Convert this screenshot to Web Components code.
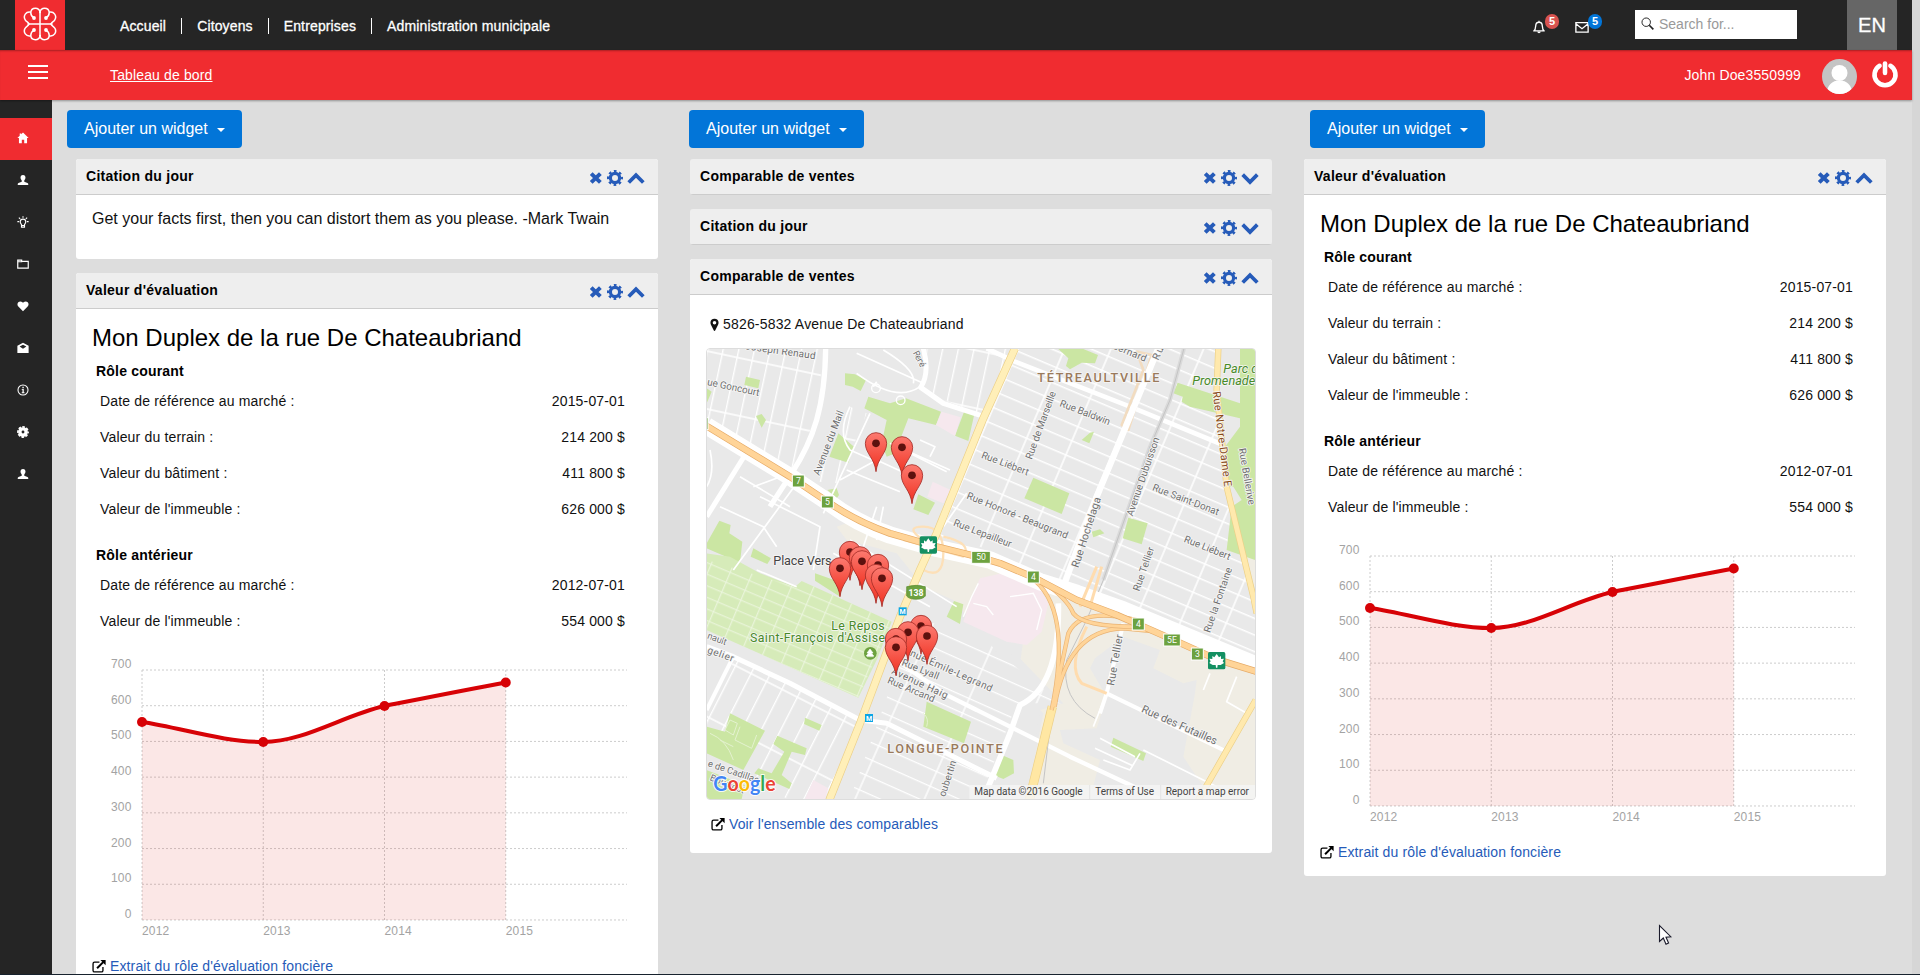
<!DOCTYPE html>
<html lang="fr">
<head>
<meta charset="utf-8">
<title>Tableau de bord</title>
<style>
html,body{margin:0;height:100%;overflow:hidden;background:#ddd}
body{font-family:"Liberation Sans",Arial,sans-serif;font-size:14px;color:#000}
</style>
</head>
<body>
<city-dashboard></city-dashboard>
<script>
const define = (name, css, html) => customElements.define(name, class extends HTMLElement {
  connectedCallback() {
    if (this.shadowRoot) return;
    const t = document.createElement('template');
    t.innerHTML = '<style>*{box-sizing:border-box}' + css + '</style>' + (typeof html === 'function' ? html(this) : html);
    this.attachShadow({mode: 'open'}).append(t.content.cloneNode(true));
  }
});

/* ---------- icons ---------- */
const person = '<path d="M8 1.2c2.300 0 3.400 1.600 3.300 3.600-.1 1.700-.8 3-1.600 3.700v1.700l4.300 1.700c.7.300 1 .8 1 1.500v1.400H1v-1.400c0-.7.3-1.200 1-1.500l4.300-1.700V8.500C5.500 7.800 4.800 6.500 4.700 4.800 4.600 2.800 5.700 1.200 8 1.200z" fill="currentColor"/>';
const gear = '<circle cx="8" cy="8" r="4.600" fill="none" stroke="currentColor" stroke-width="3.200"/><circle cx="8" cy="8" r="6.800" fill="none" stroke="currentColor" stroke-width="2.400" stroke-dasharray="2.670 2.670" stroke-dashoffset="1.330"/>';
const ICONS = {
  home: '<path d="M8 .8 15.500 8H13.400V15H9.600V10.300H6.400V15H2.600V8H.5L3.600 5V2h2v1.100z" fill="currentColor"/>',
  person, gear,
  cog: '<circle cx="8" cy="8" r="4.200" fill="none" stroke="currentColor" stroke-width="4.600"/><circle cx="8" cy="8" r="6.800" fill="none" stroke="currentColor" stroke-width="2.200" stroke-dasharray="3.400 1.940" stroke-dashoffset="1.700"/>',
  bulb: '<g fill="none" stroke="currentColor" stroke-width="1.500"><path d="M6 11.500C5.500 10 4.300 9.600 4.300 7.800a3.700 3.700 0 0 1 7.400 0c0 1.800-1.200 2.200-1.700 3.700v3.300H6zM6 12.700h4M8 .3v2M.5 7.500h2.300M13.200 7.500h2.300M2.500 2.200l1.700 1.700M13.500 2.200l-1.700 1.700"/></g>',
  folder: '<path d="M1 13.500V2.800h5.200v1.700H15v9zM1 5h6" fill="none" stroke="currentColor" stroke-width="1.600"/>',
  heart: '<path d="M8 15 1.800 8.800C.2 7.200.2 4.600 1.700 3c1.500-1.500 4-1.500 5.500 0l.8.800.8-.8c1.500-1.500 4-1.500 5.500 0s1.500 4.200-.1 5.800z" fill="currentColor"/>',
  open: '<path d="M8 1 15.500 5v9.800H.5V5zM3.500 6 8 9l4.500-3L8 3.500z" fill="currentColor" fill-rule="evenodd"/>',
  info: '<circle cx="8" cy="8" r="6.700" fill="none" stroke="currentColor" stroke-width="1.400"/><path d="M7.200 3.800h1.800v1.700H7.200zM6.300 6.600H9v4.400h1v1.200H6.300V11h1V7.800h-1z" fill="currentColor"/>',
  bell: '<path d="M2 12.500c1.700-1.200 2.100-2.600 2.200-5.500C4.300 4 6 2.600 8 2.600s3.700 1.400 3.800 4.400c.1 2.900.5 4.300 2.200 5.500zM8 .8v1.800" fill="none" stroke="currentColor" stroke-width="1.500" stroke-linejoin="round"/><path d="M6.100 13.200h3.800c0 2.600-3.800 2.600-3.800 0z" fill="currentColor"/>',
  mail: '<path d="M1 3h14v10.800H1zM1 4.200 8 10l7-5.800" fill="none" stroke="currentColor" stroke-width="1.500"/>',
  search: '<circle cx="6.400" cy="6.400" r="5.200" fill="none" stroke="currentColor" stroke-width="1.200"/><path d="m10.200 10.200 5 5" stroke="currentColor" stroke-width="2"/>',
  power: '<path d="M4.900 3.300a6 6 0 1 0 6.200 0" fill="none" stroke="currentColor" stroke-width="2.600" stroke-linecap="round"/><path d="M8 2V7.400" stroke="currentColor" stroke-width="2.600" stroke-linecap="round"/>',
  close: '<path d="m2.500 2.900 10.500 10.200M13 2.900 2.500 13.100" stroke="currentColor" stroke-width="4.500"/>',
  up: '<path d="M1.500 12 8 5.400l6.500 6.600" fill="none" stroke="currentColor" stroke-width="3.300"/>',
  down: '<path d="M1.500 5 8 11.600 14.500 5" fill="none" stroke="currentColor" stroke-width="3.300"/>',
  ext: '<path d="M8.500 3.600H3A1.800 1.800 0 0 0 1.200 5.400v7.600A1.800 1.800 0 0 0 3 14.800h7.700a1.800 1.800 0 0 0 1.800-1.800V9.200" fill="none" stroke="currentColor" stroke-width="1.500"/><path d="m5.800 10.600 7-7" stroke="currentColor" stroke-width="2.300"/><path d="M9.600 1H15.600V7z" fill="currentColor"/>',
  pin: '<path fill-rule="evenodd" d="M8 1c3 0 5 2 5 4.900 0 1-.3 1.800-.6 2.500L9 15.200c-.5.900-1.500.9-2 0L3.600 8.400C3.300 7.700 3 6.900 3 5.900 3 3 5 1 8 1zm0 2.700a2.200 2.200 0 1 0 0 4.400 2.200 2.200 0 0 0 0-4.400z" fill="currentColor"/>'
};
define('ui-icon', ':host{display:inline-block;width:var(--s,12px);height:var(--s,12px);flex:none}svg{display:block;width:100%;height:100%}',
  el => `<svg viewBox="0 0 16 16">${ICONS[el.getAttribute('name')]}</svg>`);

define('mtl-logo', ':host{display:flex;width:50px;height:50px;background:#f02c30;align-items:center;justify-content:center;padding-bottom:2px}svg{width:34px;height:34px}',
  `<svg viewBox="-17 -17 34 34" fill="none" stroke="#fff" stroke-width="1.500" stroke-linecap="round">
  <path d="M0-12V12M-12 0H12"/>
  ${[[1,1],[-1,1],[1,-1],[-1,-1]].map(([a,b]) => `<g transform="scale(${a} ${b})"><path d="M0-11.500C0-17 9-17.200 9.200-11.200C9.200-9 8.200-7.500 6.300-6.300M9.200-11.800C14-13 17.200-8 14.800-4.200C13.500-2 11.500-2 11 0"/><circle cx="6" cy="-6" r="1.900" fill="#fff" stroke="none"/></g>`).join('')}
  </svg>`);

/* ---------- bars ---------- */
define('top-bar', `
:host{display:flex;height:50px;background:#252525;color:#fff;padding-left:15px;width:1912px}
nav{display:flex;align-items:center;padding:0 0 0 40px;height:51px;letter-spacing:.14px}
nav a{padding:0 15px;line-height:16px;border-left:1px solid #fff;-webkit-text-stroke:.3px #fff}
nav a:first-child{border:0}
.r{margin-left:auto;display:flex}
.n{display:flex;position:relative;align-items:flex-start;padding-top:20px;width:43px}
.n b{position:absolute;left:13px;top:14px;width:14px;height:15px;border-radius:8px;background:#d9534f;font-size:11px;line-height:15px;text-align:center}
.n:nth-child(2) b{background:#0275d8}
.s{display:flex;background:#fff;width:162px;height:29px;margin:10px 50px 0 17px;padding:7px 6px;color:#222;gap:5px}
.s span{color:#999;line-height:15px}
.en{width:50px;background:#666;margin-right:15px;font-size:20px;line-height:50px;text-align:center;-webkit-text-stroke:.3px #fff}`,
`<mtl-logo></mtl-logo><nav><a>Accueil</a><a>Citoyens</a><a>Entreprises</a><a>Administration municipale</a></nav>
<div class="r"><div class="n"><ui-icon name="bell" style="--s:14px"></ui-icon><b>5</b></div><div class="n"><ui-icon name="mail" style="--s:14px"></ui-icon><b>5</b></div>
<div class="s"><ui-icon name="search" style="--s:13px"></ui-icon><span>Search for...</span></div><div class="en">EN</div></div>`);

define('user-bar', `
:host{display:flex;position:relative;height:50px;width:1912px;background:#f02c30;color:#fff;box-shadow:0 1px 2px rgba(0,0,0,.35),inset 0 2px 2px -1px rgba(0,0,0,.3);padding-left:28px;letter-spacing:.14px}
.h{width:20px;height:14px;border-top:2px solid #fff;border-bottom:2px solid #fff;margin-top:15px;display:flex;align-items:center}
.h i{height:2px;width:100%;background:#fff}
a{margin:17px 0 0 62px;line-height:16px;text-decoration:underline}
.u{margin:17px 21px 0 auto;line-height:16px}
svg{width:35px;height:35px;margin:9px 14px 0 0}
ui-icon{margin:10px 13px 0 0}`,
`<div class="h"><i></i></div><a>Tableau de bord</a><span class="u">John Doe3550999</span>
<svg viewBox="0 0 35 35"><defs><clipPath id="c"><circle cx="17.500" cy="17.500" r="17.500"/></clipPath></defs><g clip-path="url(#c)"><path fill="#c4c4c4" d="M0 0h35v35H0z"/><circle cx="17.500" cy="14" r="8" fill="#fff"/><path fill="#fff" d="M5 35c0-9 5-13.500 12.500-13.500S30 26 30 35z"/></g></svg>
<ui-icon name="power" style="--s:28px"></ui-icon>`);

define('side-bar', `
:host{display:flex;flex-direction:column;background:#252525;color:#fff;padding-top:18px}
div{height:42px;display:flex;align-items:center;padding:0 0 2px 17px}
div:first-of-type{background:#f02c30}
:host ui-icon{--s:12px}`,
  ['home','person','bulb','folder','heart','open','info','cog','person'].map(n => `<div><ui-icon name="${n}"></ui-icon></div>`).join(''));

/* ---------- widgets ---------- */
define('add-button', `
:host{display:flex;align-items:center;justify-content:space-between;width:175px;height:38px;margin:0 0 11px var(--shift,0);padding:0 17px 1px;border-radius:4px;background:#0275d8;color:#fff;font-size:16px}
i{border:4px solid transparent;border-top-color:#fff;border-bottom:0;margin-top:3px}`, '<slot></slot><i></i>');

define('widget-card', `
:host{display:block;background:#fff;border-radius:3px;margin-bottom:14px;overflow:hidden}
header{display:flex;height:36px;background:#eee;border-bottom:1px solid #ccc;padding:0 13px 0 10px;font-weight:700;line-height:35px;letter-spacing:.27px}
span{flex:1}
div{display:flex;color:#265bb9;gap:4px;height:36px;align-items:center;padding-top:1px}`,
el => `<header><span>${el.getAttribute('label')}</span><div><ui-icon name="close" style="--s:14px"></ui-icon><ui-icon name="gear" style="--s:16px"></ui-icon><ui-icon name="${el.hasAttribute('closed') ? 'down' : 'up'}" style="--s:18px"></ui-icon></div></header><slot></slot>`);

define('widget-link', ':host{display:flex;align-items:center;gap:4px;line-height:24px;height:24px;letter-spacing:.13px}a{color:#265bb9}',
  '<ui-icon name="ext" style="--s:14px"></ui-icon><a><slot></slot></a>');

define('value-chart', ':host{display:block;height:310px}svg{display:block;width:582px;height:310px}text{font-size:12px;fill:#a3a3a3;letter-spacing:.15px}', () => {
  let g = '';
  for (let i = 0; i < 8; i++) g += `<path d="M66 ${31 + i * 35.71}H551"/>`;
  for (let i = 0; i < 4; i++) g += `<path d="M${66 + i * 121.25} 31V281"/>`;
  let t = '';
  for (let i = 0; i < 8; i++) t += `<text x="55.500" y="${29 + i * 35.71}" text-anchor="end">${700 - i * 100}</text>`;
  for (let i = 0; i < 4; i++) t += `<text x="${66 + i * 121.25}" y="296">${2012 + i}</text>`;
  const c = 'M66 83C106 89 147 103 187.250 103C228 103 268 76 308.500 67C349 59 389 51 429.750 43.500';
  return `<svg viewBox="0 0 582 310"><g stroke="#ccc" stroke-dasharray="2 2" fill="none">${g}</g>
  <path d="${c}V281H66z" fill="#d71206" fill-opacity=".1"/><path d="${c}" fill="none" stroke="#d70206" stroke-width="4"/>
  <g fill="#d70206"><circle cx="66" cy="83" r="5"/><circle cx="187.250" cy="103" r="5"/><circle cx="308.500" cy="67" r="5"/><circle cx="429.750" cy="43.500" r="5"/></g>${t}</svg>`;
});

define('evaluation-panel', `
:host{display:block;padding:14px 0 12px;height:681px}
h2{font-weight:400;font-size:24px;line-height:30px;margin:0 16px 6px}
h3{font-size:14px;line-height:24px;margin:0 20px;letter-spacing:.2px}
h3.b{margin-top:16px}
p{display:flex;justify-content:space-between;margin:0 33px 0 24px;line-height:36px;letter-spacing:.16px;color:#111}
widget-link{margin:5px 16px 0}`,
`<h2>Mon Duplex de la rue De Chateaubriand</h2><h3>Rôle courant</h3>
<p><span>Date de référence au marché :</span><span>2015-07-01</span></p><p><span>Valeur du terrain :</span><span>214 200 $</span></p>
<p><span>Valeur du bâtiment :</span><span>411 800 $</span></p><p><span>Valeur de l'immeuble :</span><span>626 000 $</span></p>
<h3 class="b">Rôle antérieur</h3><p><span>Date de référence au marché :</span><span>2012-07-01</span></p><p><span>Valeur de l'immeuble :</span><span>554 000 $</span></p>
<value-chart></value-chart><widget-link>Extrait du rôle d'évaluation foncière</widget-link>`);

define('quote-panel', ':host{display:block;height:64px;padding:12px 16px;font-size:16px;line-height:24px;color:#111}', '<slot></slot>');

define('sales-panel', `
:host{display:block;height:558px;padding:17px 16px 16px 17px}
p{display:flex;align-items:center;margin:0 0 12px 1px;height:24px;line-height:24px;gap:2px;letter-spacing:.18px;color:#111}
sales-map{margin:0 0 12px -1px}
widget-link{margin-left:4px}`,
`<p><ui-icon name="pin" style="--s:13px"></ui-icon><span>5826-5832 Avenue De Chateaubriand</span></p><sales-map></sales-map><widget-link>Voir l'ensemble des comparables</widget-link>`);

/* ---------- map: units are thirds of a pixel ---------- */
define('sales-map', `
:host{display:block;width:550px;height:452px;border:1px solid #ddd;border-radius:4px;overflow:hidden}
svg{display:block;width:548px;height:450px;font-family:Roboto,"Open Sans",sans-serif}
.l text{font-size:30px;fill:#6f6f6f;stroke:#f6f6f6;stroke-width:5px;paint-order:stroke;stroke-linejoin:round}
.g{fill:#cbe6a3}`, () => {
  const label = (x, y, r, len, s, style = '') => `<text transform="translate(${x} ${y}) rotate(${r})" textLength="${len}" style="${style}">${s}</text>`;
  const road = (d, w, c = '#fff', e) => (e ? `<path d="${d}" stroke="${e}" stroke-width="${w + 4}"/>` : '') + `<path d="${d}" stroke="${c}" stroke-width="${w}"/>`;
  const sign = (x, y, s, w = 36) => `<g transform="translate(${x} ${y})"><rect x="${-w/2}" y="-18" width="${w}" height="36" fill="#6da23f" stroke="#fff" stroke-width="3"/><text y="9" text-anchor="middle" font-size="26" fill="#fff">${s}</text></g>`;
  const leaf = (x, y) => `<g transform="translate(${x} ${y})"><rect x="-26" y="-26" width="52" height="52" rx="5" fill="#149062"/><path fill="#fff" d="M0-20 7-10 13-14 13-5 22-6 18 2 22 7 12 13 3 13 2 21-2 21-3 13-12 13-22 7-18 2-22-6-13-5-13-14-7-10z"/></g>`;
  const metro = (x, y) => `<g transform="translate(${x} ${y})"><rect x="-12" y="-12" width="24" height="24" fill="#0ba5e5"/><text y="8" text-anchor="middle" font-size="21" font-weight="700" fill="#fff">M</text></g>`;
  const pin = (x, y) => `<g transform="translate(${x} ${y})"><path d="M0 85C-4 45-32 30-32 0A32 32 0 0 1 32 0C32 30 4 45 0 85z" fill="url(#pg)" stroke="#a52c26" stroke-width="2.500"/><circle r="11.500" fill="#5c110e"/></g>`;
  const pins = [[558,310],[636,322],[666,406],[480,636],[510,652],[516,664],[450,685],[564,675],[558,705],[576,715],[693,858],[654,877],[711,888],[618,897],[618,922]];
  return `<svg viewBox="51 27 1644 1350" preserveAspectRatio="none"><defs>
  <linearGradient id="pg" x1="0" y1="0" x2="0" y2="1"><stop offset="0" stop-color="#fc7a70"/><stop offset="1" stop-color="#f03020"/></linearGradient>
  <pattern id="ne" width="128" height="46" patternUnits="userSpaceOnUse" patternTransform="translate(980 30) rotate(23)"><path d="M0 2H128M3 0V46" stroke="#fff" stroke-width="4.500"/></pattern>
  <pattern id="nw" width="46" height="170" patternUnits="userSpaceOnUse" patternTransform="translate(50 30) rotate(12)"><path d="M0 3H46M2 0V170" stroke="#fff" stroke-width="4"/></pattern>
  <pattern id="sw" width="52" height="175" patternUnits="userSpaceOnUse" patternTransform="translate(90 950) rotate(27)"><path d="M0 3H52M2 0V175" stroke="#fff" stroke-width="4"/></pattern>
  <pattern id="se" width="190" height="48" patternUnits="userSpaceOnUse" patternTransform="translate(740 820) rotate(24)"><path d="M0 2H190M3 0V48" stroke="#fff" stroke-width="4"/></pattern>
  <pattern id="cm" width="62" height="32" patternUnits="userSpaceOnUse" patternTransform="translate(50 700) rotate(23)"><path d="M0 2H62M2 0V32" stroke="#edf6e0" stroke-width="3"/></pattern>
  </defs>
  <path fill="#e9e9e9" d="M0 0H1750V1400H0z"/>
  <path fill="#f0ede4" d="M440 560 520 530 720 600 900 640 1110 750 1300 830 1697 980V1377H1010L1060 1120 980 1040 1000 900 850 850 790 780 700 740 620 640 470 600zM1650 640 1695 660V740L1665 700z"/>
  <path fill="#e9e9e9" d="M1300 890 1410 930 1390 985 1480 1030 1520 1020 1515 1060 1480 1250 1540 1340 1520 1377H1200L1230 1260 1120 1210 1110 1170 1220 1165 1250 1070 1200 985 1215 955zM840 920 980 945 1120 1090 1050 1110 1010 1377H800z"/>
  <path fill="url(#ne)" d="M975 25H1580L1600 400 1670 700 1695 800V970L1440 870 1130 740 870 620 745 590z"/>
  <path fill="url(#nw)" d="M50 25H400L385 190 345 320 300 400 50 245z"/>
  <path fill="url(#nw)" d="M480 200 530 220 445 430 380 425zM710 25H975L905 200 880 225 760 180 710 150z"/>
  <path fill="url(#sw)" d="M140 950 500 1130 490 1240 420 1377H290L50 1200V1090z"/>
  <path fill="url(#se)" d="M690 840 860 880 1000 1000 1120 1090 980 1090 900 1300 860 1377H480L570 1130 640 930z"/>
  <g class="g"><path d="M465 100 495 103 528 120 512 153 488 140 465 135zM168 110 210 120 205 145 163 135zM198 228 215 222 228 240 215 263zM50 145 65 155 50 190zM535 170 600 190 648 175 753 215 738 255 655 235 630 300 640 330 590 350 575 310 590 240 523 205zM825 208 854 218 835 303 795 287zM445 280 492 320 475 368 418 350zM412 450 440 445 447 465 440 475zM685 463 735 488 715 525 670 508zM88 542 122 555 118 580 157 605 150 668 50 625V610zM190 625 243 655 232 672 182 650zM375 700 460 730 450 770 375 722z"/>
  <path d="M1105 27H1180L1224 45 1215 70 1175 68 1140 88 1128 78 1135 55zM1175 300 1200 278 1212 275 1198 310zM1030 413 1138 460 1115 522 1003 475zM1315 533 1373 550 1355 613 1298 595zM1205 575 1230 568 1243 580 1210 592zM1650 27H1695V660L1610 630 1625 500 1655 480 1630 440 1610 440 1605 320 1650 260 1650 235 1500 200 1475 185 1478 170 1450 160 1463 128 1650 190z"/>
  <path d="M792 783 820 793 810 852 770 830zM710 1085 843 1145 822 1210 700 1160zM345 1133 395 1155 388 1172 342 1152zM262 1187 350 1225 345 1245 305 1235 275 1305 305 1330 298 1347 193 1300 205 1285 245 1300 283 1235 250 1212zM120 1120 225 1172 160 1290 50 1240V1160L105 1175zM50 1290 165 1335 155 1377H50zM930 1243 970 1260 972 1300 940 1317 910 1305zM1270 1193 1368 1240 1360 1263 1262 1220z"/></g>
  <path fill="none" stroke="#e4f2cf" stroke-width="3" d="M120 1140 105 1170 130 1185 142 1150zM150 1160 135 1200 185 1225 200 1185M60 1180Q110 1200 130 1260M90 1200 130 1220M700 1120q18 15 10 40"/>
  <path fill="#f6e8ee" d="M755 215 812 232 795 288 738 255zM728 425 782 450 760 490 712 470zM845 770 870 715 955 695 1045 735 1075 790 1055 875 1010 915 950 905 820 845zM370 1320 415 1345 405 1377H345z"/>
  <path fill="none" stroke="#fff" stroke-width="4" d="M960 770 1030 760 1055 810 1040 870M850 790 890 800 910 825M865 730 845 770 820 830"/>
  <path fill="#d6ebb9" d="M50 640 120 650 210 700 315 740 335 723 605 845 560 960 505 1073 50 870z"/><path fill="url(#cm)" d="M50 660 315 740 335 723 605 845 505 1073 50 870z"/>
  <g fill="none" stroke-linejoin="round">
  ${road('M60 330Q75 400 50 440M190 440 300 400M90 500 220 560 260 620M150 410 300 500M320 430 130 690M210 470 390 560 370 690M540 220 400 520M450 420 560 360 690 420M470 390 630 455M580 500 560 600M480 200Q440 280 480 330L570 370M600 310 770 395M690 300 735 320 720 350M645 330 780 390M500 100Q620 190 690 140M500 40 700 130M560 125l-10 15M580 30Q680 90 670 130M760 560 830 460M560 500 520 620M480 600 800 800M430 640 720 800M200 690 320 740', 5)}
  <circle cx="558" cy="145" r="13" stroke="#fff" stroke-width="4"/><circle cx="632" cy="181" r="13" stroke="#fff" stroke-width="4"/>
  ${road('M407 25C405 200 370 300 305 400L240 500', 16)}${road('M165 345 50 530', 15)}
  ${road('M700 25Q720 100 692 142L760 190 890 232', 15)}${road('M890 25 975 65 1320 200 1600 315', 14)}
  ${road('M1340 35 1385 45 1315 270 1295 255 1360 90z', 8, '#f2dcc0')}
  ${road('M1405 25 1220 470 1120 740', 19)}
  ${road('M50 920 130 950 300 1030 510 1140 590 1150 850 1280 920 1315', 15)}${road('M130 950 50 1110', 12)}
  ${road('M840 1100 1140 1250 1410 1377M620 960 760 1060 860 1110', 13)}
  ${road('M1105 790 Q1110 1040 990 1095L960 1180 895 1340', 17)}
  ${road('M1300 850 1250 1060 1600 1230M1250 1060 1230 1120', 12)}
  ${road('M1250 1060 1210 1160M1440 900 1200 780M1560 1000 1540 1050M1640 1010 1610 1085 1670 1120M1350 1240 1320 1290 1240 1260M1360 1230 1580 1340M1230 1195 1335 1250M1215 1225 1330 1278', 5)}
  ${road('M1482 25 1440 180 1380 320 1240 720', 12, '#dadada')}${road('M1482 25 1440 180 1380 320 1240 720 1190 840 1130 960Q1110 1080 1215 1135M1085 1120 1060 1330', 3, '#c4c4c4')}
  ${road('M50 258 300 410 420 490Q500 550 600 585L740 625 900 660 1050 725 1160 760 1300 810 1697 975', 52)}
  ${road('M700 600Q640 560 700 560T760 640 700 690M760 590Q850 610 820 650L640 600', 7, '#fde0b8')}
  ${road('M1220 680 1170 800M1235 680 1200 800M1190 860Q1130 980 1175 1030L1250 1060', 9, '#ffdcae')}
  ${road('M975 25 880 235 740 580 690 690 630 830 510 1150 418 1380', 20, '#ffefb8', '#ecd088')}
  ${road('M1585 25 1580 150 1610 440 1690 770 1700 820M1697 1080 1525 1380', 15, '#ffe9ad', '#ecd088')}
  ${road('M1087 1100 1018 1380', 24, '#ffe7a3', '#ecd088')}
  ${road('M1085 1110Q1150 800 1020 710M1088 1100Q1120 950 1135 880Q1170 800 1340 840M1094 1100Q1130 870 1300 865L1400 875', 9, '#ffd498', '#e9b375')}
  ${road('M1030 705Q1130 770 1150 820Q1180 860 1340 860', 9, '#ffd498', '#e9b375')}
  ${road('M40 252 300 410 420 490Q500 545 600 580L740 620 870 652 930 670 1030 712 1160 780 1280 825 1360 860 1440 895 1580 958 1700 995', 17, '#ffd498', '#e6aa66')}
  </g>
  <g class="l">
  ${label(165,28,8,212,'Joseph Renaud')}${label(50,135,12,160,'ue Goncourt')}${label(668,38,62,52,'René','font-size:27px')}${label(388,408,-69,205,'Avenue du Mail')}
  ${label(788,556,21,185,'Rue Lepailleur')}${label(828,475,22,325,'Rue Honoré - Beaugrand')}${label(872,353,21,150,'Rue Liébert')}
  ${label(1107,198,21,160,'Rue Baldwin')}${label(1025,360,-70,215,'Rue de Marseille')}${label(1265,25,22,108,'Bernard')}${label(1405,62,-66,40,'Ru')}
  ${label(1165,685,-72,220,'Rue Hochelaga','font-size:32px')}${label(1328,530,-71,248,'Avenue Dubuisson')}${label(1385,450,21,212,'Rue Saint-Donat')}
  ${label(1480,605,22,148,'Rue Liébert')}${label(1568,155,83,288,'Rue Notre-Dame E','font-size:33px;fill:#8a4b16')}${label(1646,326,80,172,'Rue Bellerive')}
  ${label(1348,755,-71,138,'Rue Tellier')}${label(1560,880,-71,205,'Rue la Fontaine')}${label(1272,1038,-80,155,'Rue Tellier','font-size:32px')}
  ${label(1352,1115,24,245,'Rue des Futailles','font-size:33px')}${label(610,925,24,320,'Avenue Émile-Legrand')}${label(633,975,22,118,'Rue Lyall')}
  ${label(603,1000,25,182,'Avenue Haig')}${label(590,1028,23,152,'Rue Arcand')}${label(50,895,20,60,'nault','font-size:28px')}${label(50,938,20,82,'gelier')}
  ${label(765,1372,-72,112,'oubertin')}${label(52,1278,19,160,'e de Cadillac','font-size:28px')}${label(58,1320,22,110,'Boucicot','font-size:28px')}
  ${label(250,676,0,175,'Place Vers','font-size:38px;fill:#444')}
  ${label(1042,125,0,366,'TÉTREAULTVILLE','font-size:38px;font-weight:500;fill:#9a7a5c')}
  ${label(592,1240,0,346,'LONGUE-POINTE','font-size:38px;font-weight:500;fill:#9a7a5c')}
  ${label(424,869,0,160,"Le Repos",'font-size:37px;fill:#488a28')}${label(180,907,0,405,"Saint-François d'Assise",'font-size:37px;fill:#488a28')}
  <text x="1600" y="98" style="font-size:38px;font-style:italic;fill:#488a28">Parc de</text><text x="1507" y="136" style="font-size:38px;font-style:italic;fill:#488a28">Promenade</text>
  </g>
  <circle cx="541" cy="940" r="19" fill="#6da23f"/><path d="M540 927l9 12h-5l7 9h-22l7-9h-5zM531 950h20" fill="#fff" stroke="#fff" stroke-width="2"/>
  ${sign(325,423,'7')}${sign(412,486,'5')}${sign(50,251,'',8)}${sign(873,652,'50',56)}${sign(1030,711,'4')}${sign(1345,852,'4')}${sign(1446,900,'5E',50)}${sign(1522,942,'3')}
  <path d="M650 740Q678 732 706 740V768Q700 777 678 778Q656 777 650 768z" fill="#6da23f" stroke="#578a2d" stroke-width="2"/><text x="678" y="767" text-anchor="middle" font-size="26" font-weight="700" fill="#fff">138</text>
  ${leaf(715,615)}${leaf(1580,962)}${metro(638,814)}${metro(537,1134)}
  ${pins.map(p => pin(...p)).join('')}
  <text x="70" y="1354" textLength="187" lengthAdjust="spacingAndGlyphs" style="font:700 60px Lato,sans-serif;paint-order:stroke;stroke:#fff;stroke-width:5px"><tspan fill="#4285f4">G</tspan><tspan fill="#ea4335">o</tspan><tspan fill="#fbbc05">o</tspan><tspan fill="#4285f4">g</tspan><tspan fill="#34a853">l</tspan><tspan fill="#ea4335">e</tspan></text>
  <path fill="#f5f5f5" fill-opacity=".85" d="M838 1335H1697V1378H838z"/><path d="M1199 1335v43M1412 1335v43" stroke="#ddd" stroke-width="2"/>
  <g font-size="30" fill="#444"><text x="853" y="1365" textLength="325">Map data ©2016 Google</text><text x="1216" y="1365" textLength="176">Terms of Use</text><text x="1427" y="1365" textLength="250">Report a map error</text></g>
  </svg>`;
});

/* ---------- page ---------- */
define('city-dashboard', `
:host{display:grid;grid-template-rows:50px 50px 1fr 1px;height:975px;width:1920px;overflow:hidden;background:linear-gradient(90deg,#ddd 1912px,#d6d6d6 1912px)}
main{display:grid;grid-template-columns:52px 1fr;min-height:0;overflow:hidden}
section{display:grid;grid-template-columns:repeat(3,582px);gap:32px;padding:10px 0 0 24px;align-items:start;min-height:0}
footer{background:#17222d}
user-bar{z-index:1}
svg{position:absolute;left:1658px;top:924px;width:16px;height:22px}`,
`<top-bar></top-bar><user-bar></user-bar>
<main><side-bar></side-bar><section>
<div><add-button style="--shift:-9px">Ajouter un widget</add-button>
<widget-card label="Citation du jour"><quote-panel>Get your facts first, then you can distort them as you please. -Mark Twain</quote-panel></widget-card>
<widget-card label="Valeur d'évaluation"><evaluation-panel></evaluation-panel></widget-card></div>
<div><add-button style="--shift:-1px">Ajouter un widget</add-button>
<widget-card label="Comparable de ventes" closed></widget-card><widget-card label="Citation du jour" closed></widget-card>
<widget-card label="Comparable de ventes"><sales-panel></sales-panel></widget-card></div>
<div><add-button style="--shift:6px">Ajouter un widget</add-button>
<widget-card label="Valeur d'évaluation"><evaluation-panel></evaluation-panel></widget-card></div>
</section></main><footer></footer>
<svg viewBox="0 0 16 22"><path d="M1.500 1.500V17.500L5.300 14 8 20.200 10.600 19 8 13.200 12.800 12.700z" fill="#fff" stroke="#1a1a2a" stroke-width="1.100"/></svg>`);
</script>
</body>
</html>
